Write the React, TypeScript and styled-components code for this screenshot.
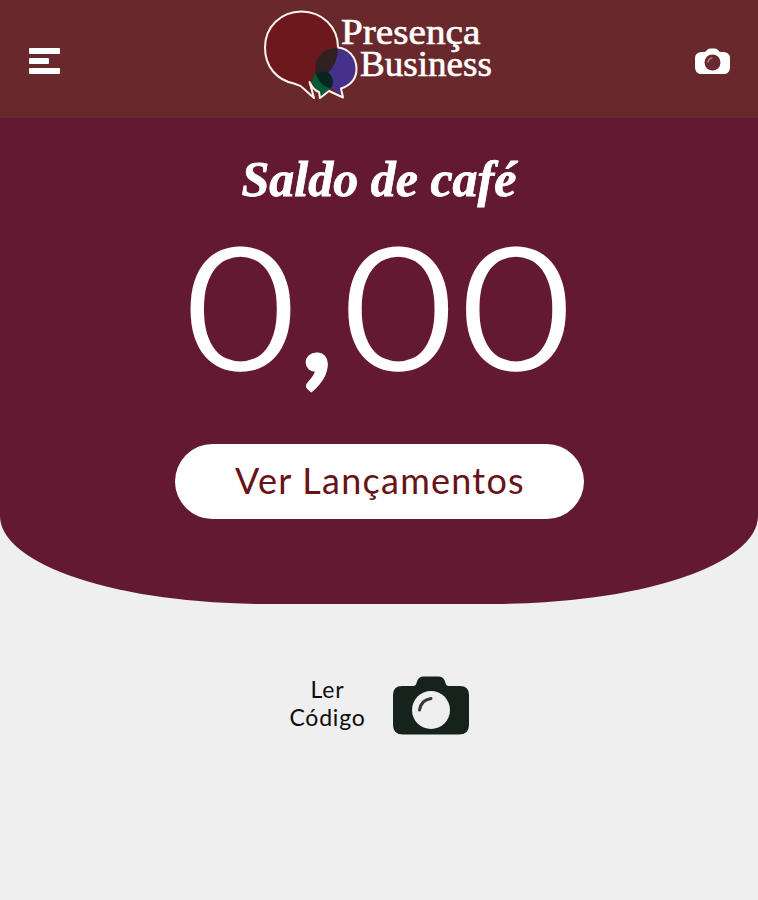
import React from "react";
import styled, { createGlobalStyle } from "styled-components";

const GlobalStyle = createGlobalStyle`
  * { box-sizing: border-box; }
  body { margin: 0; background: #efefef; font-family: Lato, "Open Sans", sans-serif; }
  button { border: 0; padding: 0; background: none; font: inherit; display: block; }
`;

const Screen = styled.div`
  height: 900px;
  overflow: hidden;
  display: flex;
  flex-direction: column;
  background: #efefef;
`;

const Header = styled.header`
  height: 118px;
  flex: none;
  display: grid;
  grid-template-columns: 264px 1fr 63px;
  background: #69292c;
`;

const MenuButton = styled.button`
  padding: 48px 0 0 29px;
  display: flex;
  flex-direction: column;
  align-items: flex-start;
  justify-content: flex-start;
  gap: 4px;
`;

const MenuBar = styled.span<{ $short?: boolean }>`
  width: ${(p) => (p.$short ? 20 : 31)}px;
  height: 6px;
  border-radius: 1px;
  background: #fff;
`;

const Brand = styled.div`
  display: flex;
  padding-top: 10px;
`;

const BrandMark = styled.svg`
  flex: none;
  width: 94px;
  height: 92px;
`;

const BrandName = styled.div`
  margin-left: -17px;
  padding-top: 7px;
  color: #fff;
  font: 35px/32px "Liberation Serif", serif;
  -webkit-text-stroke: 0.6px #fff;
`;

const BrandLine = styled.div<{ $indent?: number; $scale: number }>`
  width: max-content;
  margin-left: ${(p) => p.$indent ?? 0}px;
  transform: scaleX(${(p) => p.$scale});
  transform-origin: left;
`;

const HeaderCamera = styled.button`
  align-self: start;
  padding-top: 47px;
  svg { display: block; width: 35px; height: 28px; }
`;

const Hero = styled.main`
  height: 486px;
  flex: none;
  display: flex;
  flex-direction: column;
  align-items: center;
  background: #631931;
  border-radius: 0 0 265px 265px / 0 0 88px 88px;
`;

const Title = styled.h1`
  margin: 36px 0 0;
  height: 56px;
  color: #fff;
  font: italic bold 50px/50px "Liberation Serif", serif;
  -webkit-text-stroke: 0.8px #fff;
  white-space: nowrap;
`;

const Amount = styled.div`
  margin-top: 18px;
  height: 216px;
  padding-left: 7px;
  color: #fff;
  font: 300 167px/154px Lato, sans-serif;
  letter-spacing: 7.4px;
  -webkit-text-stroke: 3.6px #fff;
  white-space: nowrap;
  transform: scaleX(1.13);
`;

const Units = styled.span`
  letter-spacing: 1.9px;
`;

const Comma = styled.span`
  font-size: 154px;
  letter-spacing: 7px;
  -webkit-text-stroke: 6px #fff;
`;

const PillButton = styled.button`
  width: 409px;
  height: 75px;
  flex: none;
  padding-bottom: 3px;
  border-radius: 38px;
  background: #fff;
  color: #671318;
  font: 36px/70px Lato, sans-serif;
  letter-spacing: 1.25px;
  text-indent: 2px;
  text-align: center;
`;

const ScanRow = styled.section`
  display: flex;
  align-items: flex-start;
  padding: 71px 0 0 288px;
`;

const ScanLabel = styled.div`
  width: 79px;
  text-align: center;
  font: 23px/28px Lato, sans-serif;
  letter-spacing: 0.8px;
  color: #0c0c0c;
`;

const ScanCamera = styled.svg`
  width: 78px;
  height: 60px;
  margin: 1px 0 0 25px;
`;

export default function App() {
  return (
    <Screen>
      <GlobalStyle />
      <Header>
        <MenuButton aria-label="Menu">
          <MenuBar />
          <MenuBar $short />
          <MenuBar />
        </MenuButton>
        <Brand>
          <BrandMark viewBox="264 10 94 92">
            <defs>
              <clipPath id="largeBubble">
                <circle cx="301.500" cy="48" r="36.500" />
              </clipPath>
              <clipPath id="mediumBubble">
                <circle cx="336" cy="68.500" r="20.800" />
              </clipPath>
            </defs>
            <path d="M330 86 L343 97 L341 85 Z" fill="#45308c" />
            <circle cx="336" cy="68.500" r="20.500" fill="#45308c" />
            <path d="M290 82 L314 98 L310 80 Z" fill="#6d181c" />
            <circle cx="301.500" cy="48" r="36.500" fill="#6d181c" />
            <circle cx="336" cy="68.500" r="20.800" fill="#302121" clipPath="url(#largeBubble)" />
            <path d="M318 90 L320 97 L328 90 Z" fill="#065b38" />
            <circle cx="322.500" cy="81.500" r="10.500" fill="#065b38" />
            <circle cx="322.500" cy="81.500" r="10.500" fill="#08251f" clipPath="url(#mediumBubble)" />
            <path
              d="M338 47.500 C338 27 322 11.500 301.500 11.500 C281 11.500 265 27 265 47.500 C265 67 277 80 294 83.500 Q300 85 304 89 L314 98 L309.500 82 Q313 90 319 92 L320 98 L329 91 L343 97.500 L341 88.500 C351 85 356.500 78 356.500 69 C356.500 57 348 48 337.500 47.500"
              fill="none"
              stroke="#fff3ee"
              strokeWidth="2"
              strokeLinejoin="round"
            />
          </BrandMark>
          <BrandName>
            <BrandLine $scale={1.12}>Presença</BrandLine>
            <BrandLine $indent={19} $scale={1.06}>Business</BrandLine>
          </BrandName>
        </Brand>
        <HeaderCamera aria-label="Câmera">
          <svg viewBox="0 0 35 28">
            <path d="M6 5 H9 Q11 5 12 3 Q13 1.500 15 1.500 H20 Q22 1.500 23 3 Q24 5 26 5 H29 Q35 6 35 11 V21 Q34 27 29 27 H6 Q1 27 0 21 V11 Q0 6 6 5 Z" fill="#fff" />
            <circle cx="17.500" cy="15.500" r="8" fill="#682a2e" />
            <path d="M13 15 Q13.500 11.500 17 11" fill="none" stroke="#ad7f82" strokeWidth="1.500" strokeLinecap="round" />
          </svg>
        </HeaderCamera>
      </Header>
      <Hero>
        <Title>Saldo de café</Title>
        <Amount><Units>0</Units><Comma>,</Comma>00</Amount>
        <PillButton>Ver Lançamentos</PillButton>
      </Hero>
      <ScanRow>
        <ScanLabel>Ler Código</ScanLabel>
        <ScanCamera viewBox="0 0 78 60">
          <path
            d="M10 10 H21 Q24 10 24.500 7 Q26 0.500 31 0.500 H47 Q52 0.500 53.500 7 Q54 10 57 10 H68 Q77 10 77 19 V49 Q77 58.500 67 58.500 H11 Q1 58.500 1 49 V19 Q1 10 10 10 Z"
            fill="#16231c"
          />
          <circle cx="39" cy="34" r="19" fill="#efefef" />
          <path d="M27.500 34 Q29 24 39 22.500" fill="none" stroke="#343a37" strokeWidth="3" strokeLinecap="round" />
        </ScanCamera>
      </ScanRow>
    </Screen>
  );
}
